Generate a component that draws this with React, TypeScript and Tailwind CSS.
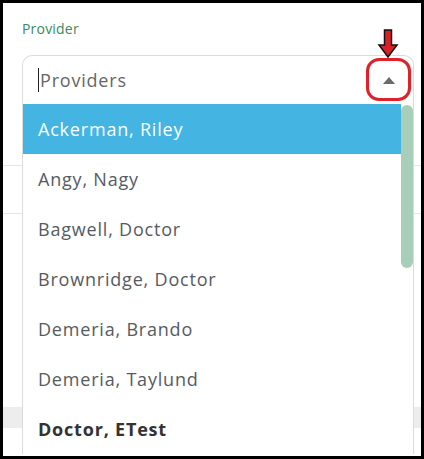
import React from "react";

const providers = [
  { name: "Ackerman, Riley", active: true },
  { name: "Angy, Nagy" },
  { name: "Bagwell, Doctor" },
  { name: "Brownridge, Doctor" },
  { name: "Demeria, Brando" },
  { name: "Demeria, Taylund" },
  { name: "Doctor, ETest", bold: true },
];

function DownArrow() {
  return (
    <svg width="24" height="30" viewBox="0 0 24 30" className="block">
      <path
        d="M8.5 1 H15.5 V16 H21 L12 28 L3 16 H8.5 Z"
        fill="#d92027"
        stroke="#111"
        strokeWidth="1.5"
      />
    </svg>
  );
}

export default function App() {
  return (
    <div
      className="relative h-[459px] w-[424px] overflow-hidden border-[3px] border-black bg-white"
      style={{ fontFamily: "'Open Sans', Lato, sans-serif" }}
    >
      {/* page content behind the menu */}
      <div className="absolute left-0 right-0 top-[162px] h-px bg-gray-200" />
      <div className="absolute left-0 right-0 top-[210px] h-px bg-gray-200" />
      <div className="absolute left-0 right-0 top-[404px] h-[21px] bg-[#ededed]" />

      <div className="relative pl-[19px] pr-[7px] pt-[16px]">
        <div className="text-[14px] leading-[20px] tracking-[0.2px] text-[#3d8a5c]">Provider</div>

        <div className="relative mt-[16px]">
          <div className="flex h-[49px] items-center rounded-t-[10px] border border-b-0 border-[#dcdcdc] bg-white pl-[15px] pr-[18px]">
            <span className="mr-px h-[24px] w-px bg-[#222]" />
            <span className="flex-1 text-[18px] tracking-[0.8px] text-[#666]">Providers</span>
            <svg width="12" height="7" viewBox="0 0 12 7">
              <path d="M6 0 L12 7 H0 Z" fill="#6b6b6b" />
            </svg>
          </div>

          {/* red annotation */}
          <div className="absolute right-[3px] top-[3px] h-[43px] w-[45px] rounded-[13px] border-[3px] border-[#e0202a]" />
          <div className="absolute right-[14px] top-[-26px]">
            <DownArrow />
          </div>

          {/* dropdown list */}
          <div className="absolute left-0 right-0 top-[49px] border-x border-[#dcdcdc] bg-white">
            <div className="relative">
              {providers.map((p) => (
                <div
                  key={p.name}
                  className={
                    "flex h-[50px] items-center pl-[15px] text-[18px] tracking-[0.8px] " +
                    (p.active
                      ? "mr-[12px] bg-[#44b4e3] text-white"
                      : p.bold
                      ? "font-bold tracking-[0.4px] text-[#333]"
                      : "text-[#555b62]")
                  }
                >
                  {p.name}
                </div>
              ))}
              <div className="absolute right-0 top-[1px] h-[163px] w-[12px] rounded-full bg-[#a8cdb9]" />
            </div>
          </div>
        </div>
      </div>
    </div>
  );
}
